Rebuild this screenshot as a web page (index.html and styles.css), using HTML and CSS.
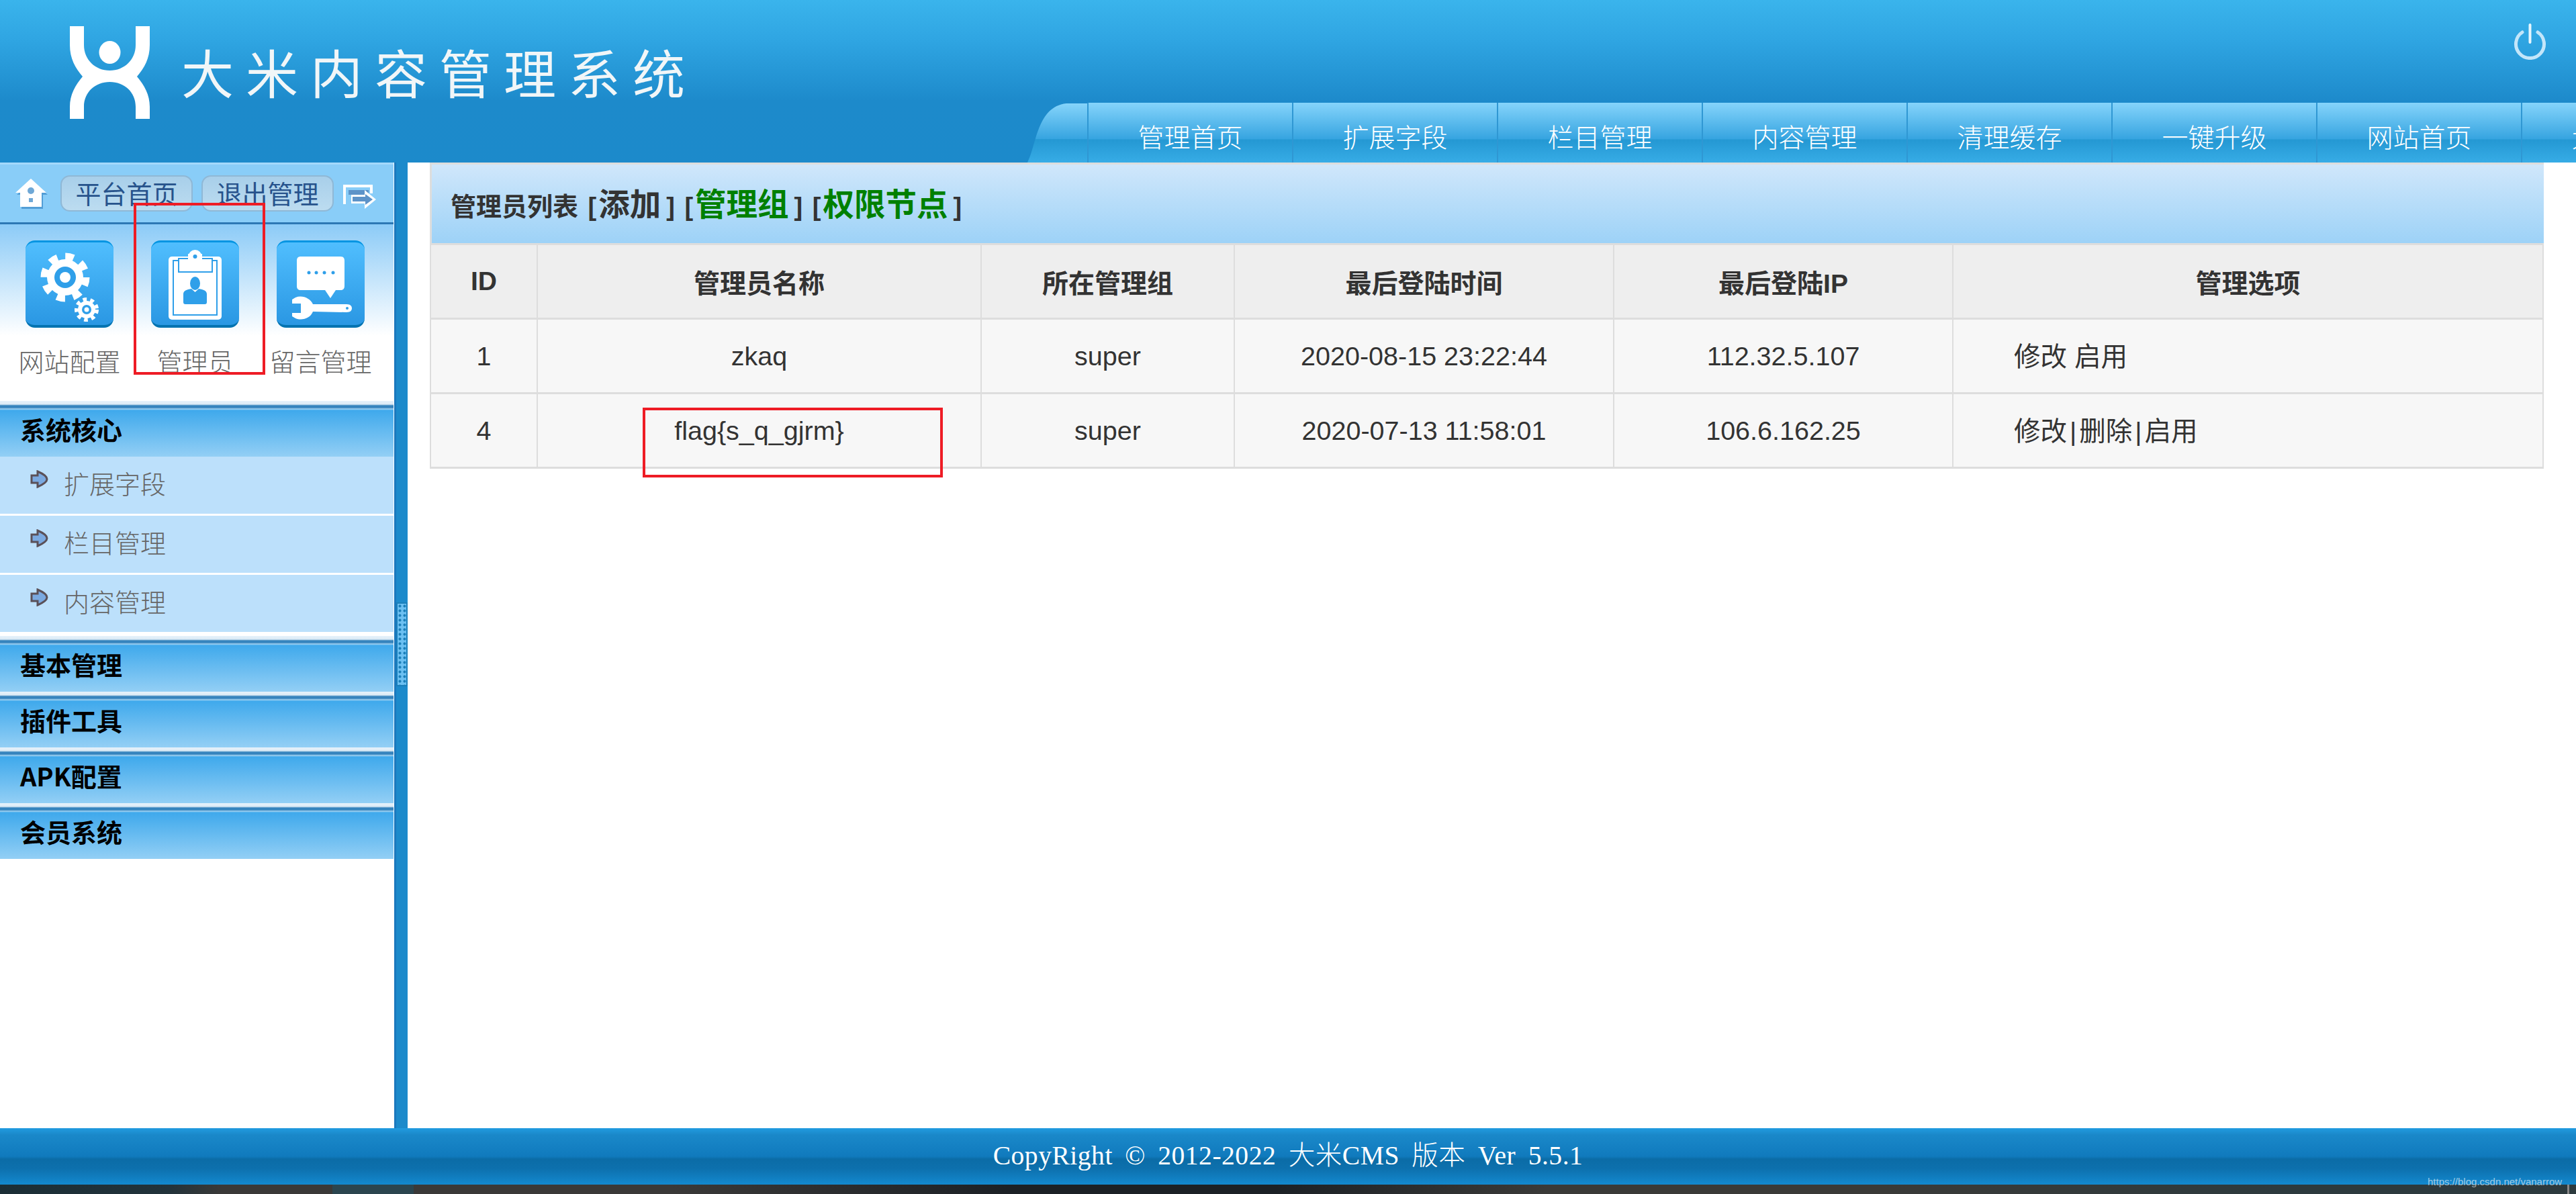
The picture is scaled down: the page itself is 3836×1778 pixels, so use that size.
FILE: index.html
```html
<!DOCTYPE html>
<html lang="zh-CN">
<head>
    <meta charset="UTF-8">
    <meta name="viewport" content="width=device-width, initial-scale=1.0">
    <title>大米内容管理系统</title>
    <link rel="stylesheet" href="styles.css">
</head>
<body>
    <header class="top">
        <div class="brand">
            <svg class="brand-logo" viewBox="0 0 119 138">
                <path fill="#fff" d="M0 0H21V28C21 50 38 66 59.5 66C81 66 98 50 98 28V0H119V28C119 48 111 62 100 75C111 88 119 102 119 120V138H98V120C98 98 81 83 59.5 83C38 83 21 98 21 120V138H0V120C0 102 8 88 19 75C8 62 0 48 0 28Z"/>
                <ellipse fill="#fff" cx="59.5" cy="39" rx="16" ry="17"/>
            </svg>
            <div class="brand-name">大米内容管理系统</div>
        </div>
        <div class="top-right">
            <svg class="power" viewBox="0 0 49 54" fill="none" stroke-linecap="round">
                <path stroke="#c3e6fa" stroke-width="5" d="M13 13A21 21 0 1 0 36 13"/>
                <path stroke="#e6f6fe" stroke-width="4" d="M24.5 2V28"/>
            </svg>
            <nav class="nav">
                <svg class="nav-curve" viewBox="0 0 89 89">
                    <defs>
                        <linearGradient id="navCurve" x1="0" y1="0" x2="0" y2="1">
                            <stop offset="0" stop-color="#85d4fb"/>
                            <stop offset="0.6" stop-color="#36a4e0"/>
                            <stop offset="0.61" stop-color="#2498d3"/>
                            <stop offset="1" stop-color="#37ace6"/>
                        </linearGradient>
                    </defs>
                    <path fill="url(#navCurve)" d="M0 89C14 62 14 6 58 1H89V89Z"/>
                </svg>
                <a class="nav-item">管理首页</a>
                <a class="nav-item">扩展字段</a>
                <a class="nav-item">栏目管理</a>
                <a class="nav-item">内容管理</a>
                <a class="nav-item">清理缓存</a>
                <a class="nav-item">一键升级</a>
                <a class="nav-item">网站首页</a>
                <a class="nav-item">大米官网</a>
            </nav>
        </div>
    </header>

    <div class="main">
        <aside class="side">
            <div class="side-top">
                <svg class="side-home" viewBox="0 0 49 45">
                    <path fill="#2f7fc0" opacity="0.6" d="M26 3L49 24H42V45H10V24H3Z"/>
                    <path fill="#fff" d="M24 0L47 21H40V42H8V21H1Z"/>
                    <circle fill="#6fa8d6" cx="24" cy="18" r="5"/>
                    <rect fill="#6fa8d6" x="21" y="29" width="6" height="6"/>
                </svg>
                <a class="side-btn">平台首页</a>
                <a class="side-btn">退出管理</a>
                <svg class="side-exit" viewBox="0 0 49 37">
                    <path fill="none" stroke="#fff" stroke-width="4" d="M2 30V3H42V14"/>
                    <path fill="#5d93c8" d="M8 9H38V16H8Z"/>
                    <path fill="#fff" d="M12 16H32V9L49 23L32 37V29H12Z"/>
                    <path fill="#5d93c8" d="M14 19H33V15L44 23L33 31V26H14Z"/>
                </svg>
            </div>

            <div class="quick">
                <div class="quick-item">
                    <div class="quick-icon">
                        <svg viewBox="0 0 131 130">
                            <circle fill="#fff" cx="59" cy="55" r="27"/>
                            <circle fill="none" stroke="#fff" stroke-width="11" stroke-dasharray="12.5 11.85" cx="59" cy="55" r="31"/>
                            <circle fill="#2f9fe9" cx="59" cy="55" r="16"/>
                            <circle fill="#fff" cx="59" cy="55" r="8"/>
                            <circle fill="#fff" cx="91" cy="103" r="13"/>
                            <circle fill="none" stroke="#fff" stroke-width="6" stroke-dasharray="5.6 5.2" cx="91" cy="103" r="15"/>
                            <circle fill="#2f9fe9" cx="91" cy="103" r="7"/>
                            <circle fill="#fff" cx="91" cy="103" r="3.5"/>
                        </svg>
                    </div>
                    <span>网站配置</span>
                </div>
                <div class="quick-item">
                    <div class="quick-icon">
                        <svg viewBox="0 0 131 130">
                            <rect fill="#fff" x="26" y="24" width="79" height="94" rx="5"/>
                            <rect fill="none" stroke="#2f9fe9" stroke-width="2" x="33" y="30" width="65" height="81"/>
                            <circle fill="#fff" cx="65.5" cy="24" r="10"/>
                            <rect fill="#fff" x="41" y="27" width="50" height="20" stroke="#2f9fe9" stroke-width="2"/>
                            <rect fill="#fff" x="55" y="20" width="21" height="12"/>
                            <circle fill="#2f9fe9" cx="65.5" cy="24" r="3"/>
                            <ellipse fill="#2f9fe9" cx="65.5" cy="64" rx="7.5" ry="10"/>
                            <path fill="#2f9fe9" d="M48 80C48 75 53 73 60 72L65.5 77L71 72C78 73 83 75 83 80V92C83 94 82 95 80 95H51C49 95 48 94 48 92Z"/>
                        </svg>
                    </div>
                    <span>管理员</span>
                </div>
                <div class="quick-item">
                    <div class="quick-icon">
                        <svg viewBox="0 0 131 130">
                            <path fill="#fff" d="M36 24H95C99 24 101 26 101 30V68C101 72 99 74 95 74H88L80 86L72 74H36C32 74 30 72 30 68V30C30 26 32 24 36 24Z"/>
                            <g fill="#2f9fe9">
                                <circle cx="48" cy="48" r="2.5"/>
                                <circle cx="59" cy="48" r="2.5"/>
                                <circle cx="71" cy="48" r="2.5"/>
                                <circle cx="84" cy="48" r="2.5"/>
                            </g>
                            <path fill="#fff" d="M28 85C38 81 50 86 54 95L104 95C110 95 112 98 112 101C112 104 110 107 104 107L54 106C50 116 38 120 28 116L23 113V108H36V94H23V88Z"/>
                            <circle fill="#2f9fe9" cx="105" cy="101" r="2"/>
                        </svg>
                    </div>
                    <span>留言管理</span>
                </div>
            </div>

            <div class="menu-head">系统核心</div>
            <a class="menu-row">
                <svg class="menu-arrow" viewBox="0 0 27 27"><path fill="#7aa9e0" stroke="#5a5058" stroke-width="3" d="M2 8H11V2Q25 8 25 13.5Q25 19 11 25V19H2Z"/></svg>
                <span>扩展字段</span>
            </a>
            <a class="menu-row">
                <svg class="menu-arrow" viewBox="0 0 27 27"><path fill="#7aa9e0" stroke="#5a5058" stroke-width="3" d="M2 8H11V2Q25 8 25 13.5Q25 19 11 25V19H2Z"/></svg>
                <span>栏目管理</span>
            </a>
            <a class="menu-row">
                <svg class="menu-arrow" viewBox="0 0 27 27"><path fill="#7aa9e0" stroke="#5a5058" stroke-width="3" d="M2 8H11V2Q25 8 25 13.5Q25 19 11 25V19H2Z"/></svg>
                <span>内容管理</span>
            </a>
            <div class="menu-gap"></div>
            <div class="menu-head">基本管理</div>
            <div class="menu-head">插件工具</div>
            <div class="menu-head">APK配置</div>
            <div class="menu-head">会员系统</div>
        </aside>

        <div class="split">
            <div class="split-grip"></div>
        </div>

        <main class="content">
            <div class="panel">
                <div class="panel-title">
                    管理员列表
                    <span class="bracket">[</span><a class="big">添加</a><span class="bracket">]</span>
                    <span class="bracket">[</span><a class="big green">管理组</a><span class="bracket">]</span>
                    <span class="bracket">[</span><a class="big green">权限节点</a><span class="bracket">]</span>
                </div>
                <table class="list">
                    <colgroup>
                        <col class="col-id">
                        <col class="col-name">
                        <col class="col-group">
                        <col class="col-time">
                        <col class="col-ip">
                        <col>
                    </colgroup>
                    <thead>
                        <tr>
                            <th>ID</th>
                            <th>管理员名称</th>
                            <th>所在管理组</th>
                            <th>最后登陆时间</th>
                            <th>最后登陆IP</th>
                            <th>管理选项</th>
                        </tr>
                    </thead>
                    <tbody>
                        <tr>
                            <td>1</td>
                            <td>zkaq</td>
                            <td>super</td>
                            <td>2020-08-15 23:22:44</td>
                            <td>112.32.5.107</td>
                            <td class="ops">修改 启用</td>
                        </tr>
                        <tr>
                            <td>4</td>
                            <td>flag{s_q_gjrm}</td>
                            <td>super</td>
                            <td>2020-07-13 11:58:01</td>
                            <td>106.6.162.25</td>
                            <td class="ops">修改<i>|</i>删除<i>|</i>启用</td>
                        </tr>
                    </tbody>
                </table>
            </div>
        </main>
    </div>

    <footer class="foot">CopyRight © 2012-2022 大米CMS 版本 Ver 5.5.1</footer>
    <div class="taskbar"><b></b></div>

    <!-- red boxes drawn on the screenshot, and the blog watermark -->
    <div class="mark mark-admin"></div>
    <div class="mark mark-flag"></div>
    <div class="watermark">https://blog.csdn.net/vanarrow</div>
</body>
</html>
```

FILE: styles.css
```css
:root {
    --cjk: "Noto Sans CJK SC", sans-serif;
    --sans: "Liberation Sans", "Noto Sans CJK SC", sans-serif;
    --line: #dddddd;
    --strip: #1c8acb;
}

* {
    margin: 0;
    padding: 0;
    box-sizing: border-box;
}

body {
    position: relative;
    display: flex;
    flex-direction: column;
    height: 100vh;
    overflow: hidden;
    background: #fff;
    font-family: var(--sans);
    color: #333;
}

/* top banner */
.top {
    display: flex;
    flex: none;
    height: 242px;
    background: linear-gradient(#3ab4ec 0, #2fa5e2 60px, #1d8acb 150px, #1c8acb 100%);
}

.brand {
    display: flex;
    align-items: flex-start;
    padding: 39px 0 0 104px;
}

.brand-logo {
    width: 119px;
    height: 138px;
}

.brand-name {
    margin: 22px 0 0 47px;
    font-family: var(--cjk);
    font-size: 78px;
    font-weight: 400;
    line-height: 90px;
    letter-spacing: 18px;
    color: #f1f6f8;
    white-space: nowrap;
}

.top-right {
    display: flex;
    flex-direction: column;
    width: 2306px;
    margin-left: auto;
    overflow: hidden;
}

.power {
    align-self: flex-end;
    width: 49px;
    height: 54px;
    margin: 35px 44px 0 0;
}

.nav {
    display: flex;
    height: 89px;
    margin-top: auto;
}

.nav-curve {
    flex: none;
    width: 89px;
    height: 89px;
}

.nav-item {
    flex: none;
    width: 305px;
    height: 89px;
    padding-top: 25px;
    border-left: 2px solid #2f97d3;
    background: linear-gradient(#85d4fb 0, #36a4e0 54px, #2498d3 55px, #37ace6 100%);
    font-family: var(--cjk);
    font-size: 39px;
    font-weight: 300;
    line-height: 48px;
    text-align: center;
    color: #fff;
}

/* middle */
.main {
    display: flex;
    flex: 1;
    min-height: 0;
}

.side {
    flex: none;
    width: 587px;
    border-right: 1px solid #fff;
    font-family: var(--cjk);
}

.side-top {
    display: flex;
    align-items: center;
    height: 92px;
    padding-left: 22px;
    border-top: 3px solid #a3d9fb;
    border-bottom: 3px solid #2d78b4;
    background: #89cdf8;
}

.side-home {
    flex: none;
    width: 49px;
    height: 45px;
    margin-right: 19px;
}

.side-btn {
    flex: none;
    width: 197px;
    height: 54px;
    margin-right: 13px;
    border: 2px solid #8fb8d6;
    border-radius: 14px;
    background: linear-gradient(#a8cfea, #bcdcf0);
    font-size: 38px;
    line-height: 48px;
    text-align: center;
    color: #27538c;
}

.side-exit {
    flex: none;
    width: 49px;
    height: 37px;
    margin: 8px 0 0 1px;
}

.quick {
    display: grid;
    grid-template-columns: repeat(3, 187px);
    height: 263px;
    padding: 24px 0 0 10px;
    background: linear-gradient(#8ccbf7 0, #fff 166px);
}

.quick-item {
    display: flex;
    flex-direction: column;
    align-items: center;
    font-size: 38px;
    font-weight: 300;
    line-height: 46px;
    color: #666;
}

.quick-item span {
    margin-top: 26px;
    white-space: nowrap;
}

.quick-icon {
    width: 131px;
    height: 130px;
    border-top: 3px solid #0495e2;
    border-bottom: 4px solid #0273b0;
    border-radius: 14px;
    background: linear-gradient(#50befe, #2a97e3);
    overflow: hidden;
}

.quick-icon svg {
    display: block;
    width: 131px;
    height: 130px;
    margin-top: -3px;
}

.menu-head {
    height: 83px;
    padding-left: 30px;
    background: linear-gradient(#e6f2fb 0, #dbeaf5 5px, #3583bd 7px, #3583bd 10px, #a5d3f1 12px, #3fa9ec 14px, #93cff5 100%);
    font-size: 38px;
    font-weight: 700;
    line-height: 84px;
    color: #000;
}

.menu-row {
    display: flex;
    align-items: flex-start;
    height: 88px;
    padding: 18px 0 0 45px;
    border-bottom: 3px solid #fff;
    background: #bce0fb;
    font-size: 38px;
    font-weight: 300;
    line-height: 42px;
    color: #666;
}

.menu-arrow {
    flex: none;
    width: 27px;
    height: 27px;
    margin: 2px 23px 0 0;
}

.menu-gap {
    height: 3px;
}

.split {
    flex: none;
    width: 20px;
    padding-top: 655px;
    border-left: 3px solid #1b78bd;
    background: var(--strip);
}

.split-grip {
    width: 17px;
    height: 125px;
    border: 2px solid #1a7fba;
    background: radial-gradient(circle, #1a7fba 1.5px, transparent 2.5px) 0 0 / 7px 7px, #6cc0f2;
}

.content {
    flex: 1;
    min-width: 0;
    padding-left: 33px;
}

.panel {
    width: 3148px;
}

.panel-title {
    height: 120px;
    padding-left: 28px;
    border: solid var(--line);
    border-width: 3px 0 0 3px;
    background: linear-gradient(#d0e7fb, #9dd2f7);
    font-size: 38px;
    font-weight: 700;
    line-height: 120px;
    white-space: nowrap;
}

.bracket {
    margin-left: 4px;
}

.big {
    margin: 0 4px 0 3px;
    font-size: 46.5px;
}

.green {
    color: #008000;
}

/* admin table */
.list {
    width: 100%;
    border-collapse: collapse;
    table-layout: fixed;
    font-size: 39.5px;
}

.col-id { width: 159px; }
.col-name { width: 661px; }
.col-group { width: 377px; }
.col-time { width: 565px; }
.col-ip { width: 505px; }

.list th,
.list td {
    height: 111px;
    border: solid var(--line);
    border-width: 3px 2px;
    text-align: center;
    font-weight: 400;
}

.list th {
    background: #eeeeee;
    font-size: 39px;
    font-weight: 700;
}

.list td {
    background: #f7f7f7;
}

.list .ops {
    padding: 0 0 5px 90px;
    text-align: left;
}

.ops i {
    margin: 0 4px;
    font-style: normal;
}

/* bottom */
.foot {
    flex: none;
    height: 84px;
    background: linear-gradient(#219be0 0, #1a88c9 10px, #107abd 42px, #0b6ca6 46px, #0d70ad 60px, #1389cf 100%);
    font-family: "Liberation Serif", var(--cjk);
    font-size: 39.6px;
    font-weight: 300;
    line-height: 82px;
    letter-spacing: 0.5px;
    word-spacing: 8px;
    text-align: center;
    color: #fff;
    white-space: pre;
}

.taskbar {
    position: relative;
    flex: none;
    height: 14px;
    background:
        linear-gradient(90deg, transparent 495px, #2b454f 495px, #2b454f 616px, transparent 616px),
        linear-gradient(90deg, #1b2e36 0, #22333b 250px, #3a3938 330px, #3a3938 1000px, #1c2126 1500px, #1c2126 1900px, #3a3a38 2300px, #3a3a38 2800px, #2d3a3e 3400px, #2d3a3e 100%);
}

.taskbar b {
    position: absolute;
    top: 0;
    right: 10px;
    width: 3px;
    height: 14px;
    background: #888;
}

.mark {
    position: absolute;
    border: 4px solid #ee1c25;
}

.mark-admin {
    left: 199px;
    top: 302px;
    width: 196px;
    height: 256px;
}

.mark-flag {
    left: 957px;
    top: 607px;
    width: 447px;
    height: 104px;
}

.watermark {
    position: absolute;
    left: 3615px;
    top: 1751px;
    font-size: 15px;
    line-height: 17px;
    color: rgba(255, 255, 255, 0.6);
}
```
